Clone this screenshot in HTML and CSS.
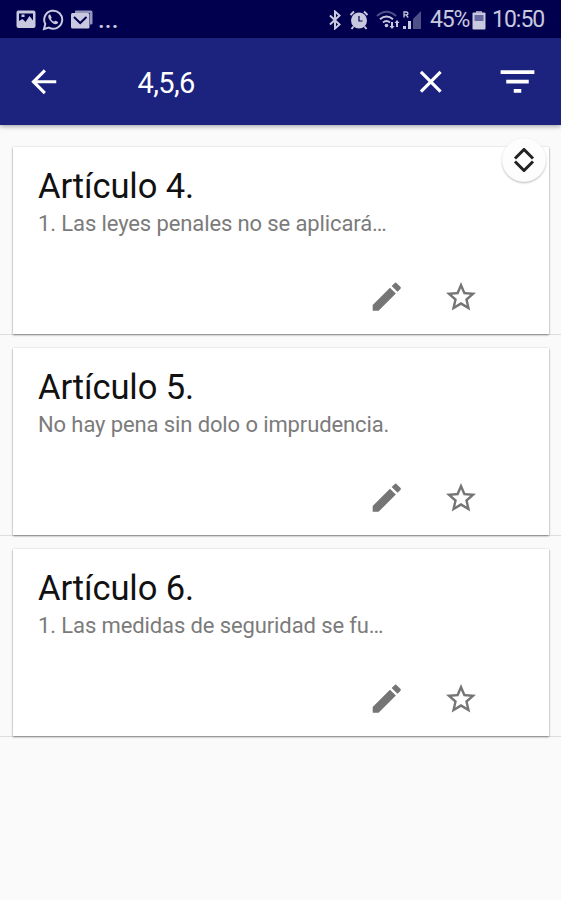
FILE: index.html
```html
<!DOCTYPE html>
<html lang="es">
<head>
<meta charset="utf-8">
<title>Artículos</title>
<link rel="stylesheet" href="styles.css">
</head>
<body>
<svg class="defs" width="0" height="0" aria-hidden="true">
  <symbol id="pencil" viewBox="0 0 24 24"><path d="M3 17.25V21h3.75L17.81 9.94l-3.75-3.75L3 17.25zM20.71 7.04a1 1 0 0 0 0-1.41l-2.34-2.34a1 1 0 0 0-1.41 0l-1.83 1.83 3.75 3.75 1.83-1.83z"/></symbol>
  <symbol id="star" viewBox="0 0 24 24"><path d="M22 9.24l-7.19-.62L12 2 9.19 8.63 2 9.24l5.46 4.73L5.82 21 12 17.27 18.18 21l-1.63-7.03L22 9.24zM12 15.4l-3.76 2.27 1-4.28-3.32-2.88 4.38-.38L12 6.1l1.71 4.04 4.38.38-3.32 2.88 1 4.28L12 15.4z"/></symbol>
</svg>
<div class="status">
  <div class="notices">
    <svg width="20" height="19" viewBox="0 0 20 19"><path fill-rule="evenodd" d="M2.500 .5h15a2 2 0 0 1 2 2v13.500a2 2 0 0 1-2 2h-15a2 2 0 0 1-2-2V2.500a2 2 0 0 1 2-2zM3 3.500v7.500l3.500-2 3 3 4-6 3.500 4.500v-7zM5.500 4.500h3v2.500h-3z"/></svg>
    <svg width="22" height="22" viewBox="0 0 22 22"><path class="line" d="M2 20l1.300-5a9 9 0 1 1 3.600 3.600z"/><path d="M7.300 5.600c-1.600 1.200-1.500 3.200 1 6.200 2.800 3.300 5.500 4.500 7.200 2.800.8-.8.700-1.500.2-1.800l-2-1c-.6-.2-.9.300-1.500 1-1.500-.4-2.700-1.600-3.300-3 .6-.6.900-1 .6-1.600l-.9-2c-.3-.7-.8-.8-1.300-.6z"/></svg>
    <svg width="23" height="19" viewBox="0 0 23 19"><path class="back" d="M5 3V1.500Q5 .5 6 .5h15q1.500 0 1.500 1.500v11q0 1.500-1.500 1.500h-1V3z"/><rect x="1" y="3" width="18.500" height="15.500" rx="1.500"/><path class="cut" d="M4 7l6.200 6L16.500 7"/></svg>
    <span class="dots">...</span>
  </div>
  <div class="signals">
    <svg class="bt" width="14" height="20" viewBox="0 0 14 20"><path class="line" d="M2 5.500l9.500 9L7 18.500v-17l4.500 4L2 14.500"/></svg>
    <svg class="alarm" width="20" height="20" viewBox="0 0 20 20"><circle cx="10" cy="10.500" r="8"/><path class="line" d="M1.500 5L5 1.500M18.500 5L15 1.500M4.500 16.500l-2 2.500M15.500 16.500l2 2.500"/><path class="cut hands" d="M10 6v5h3.500"/></svg>
    <svg class="wifi" width="24" height="20" viewBox="0 0 24 20"><path class="line dim" d="M1 6q9.500-8.500 19 0"/><path class="line" d="M4 9.300q6.500-5.500 13 0M7 12.500q3.500-3 7 0"/><circle cx="10.500" cy="15.500" r="1.800"/><path d="M15 12h2v4h1.500L16 19l-2.500-3H15zM20 17h2v-4h1.500L21 10l-2.500 3H20z"/></svg>
    <svg class="cell" width="20" height="20" viewBox="0 0 20 20"><path class="line thin" d="M2 7.500V2h2q2 0 2 1.400T4 4.800H2M4 4.800l2.200 2.700"/><path d="M1 16h3v3H1zM6 11h3v8H6z"/><path class="dim" d="M19 1v18h-8V9z"/></svg>
    <span class="percent">45%</span>
    <svg class="battery" width="14" height="20" viewBox="0 0 14 20"><path class="back" d="M4 1h6v2H4z"/><rect x=".5" y="2.500" width="13" height="17" rx="1"/><path class="level" d="M2.500 5h9v6h-9z"/></svg>
    <span class="clock">10:50</span>
  </div>
</div>
<header class="bar">
  <svg class="arrow" viewBox="0 0 24 24"><path d="M20 11H7.830l5.590-5.590L12 4l-8 8 8 8 1.410-1.410L7.830 13H20v-2z"/></svg>
  <span class="query">4,5,6</span>
  <svg class="close" viewBox="0 0 24 24"><path d="M19 6.410L17.590 5 12 10.590 6.410 5 5 6.410 10.590 12 5 17.590 6.410 19 12 13.410 17.590 19 19 17.590 13.410 12z"/></svg>
  <svg class="filter" viewBox="0 0 24 24"><path d="M10 18h4v-2h-4v2zM3 6v2h18V6H3zm3 7h12v-2H6v2z"/></svg>
</header>
<main class="list">
  <div class="row"><article class="card">
    <h2>Artículo 4.</h2><p>1. Las leyes penales no se aplicará…</p>
    <div class="actions"><svg class="pencil"><use href="#pencil"/></svg><svg class="star"><use href="#star"/></svg></div>
  </article></div>
  <div class="row"><article class="card">
    <h2>Artículo 5.</h2><p>No hay pena sin dolo o imprudencia.</p>
    <div class="actions"><svg class="pencil"><use href="#pencil"/></svg><svg class="star"><use href="#star"/></svg></div>
  </article></div>
  <div class="row"><article class="card">
    <h2>Artículo 6.</h2><p>1. Las medidas de seguridad se fu…</p>
    <div class="actions"><svg class="pencil"><use href="#pencil"/></svg><svg class="star"><use href="#star"/></svg></div>
  </article></div>
  <div class="scroller"><svg width="22" height="24" viewBox="0 0 22 24"><path d="M2 10.500l9-9 9 9M2 13.500l9 9 9-9"/></svg></div>
</main>
</body>
</html>
```
FILE: styles.css
```css
* { box-sizing: border-box; }
body {
  margin: 0;
  height: 900px;
  overflow: hidden;
  background: #fafafa;
  font-family: Roboto, sans-serif;
}
svg { display: block; flex: none; }
.defs { position: absolute; }

.status {
  height: 38px;
  padding: 1px 18px 0 16px;
  display: flex;
  justify-content: space-between;
  background: #00004f;
  color: #c8c8de;
  fill: #c8c8de;
  font-size: 23px;
  line-height: 40px;
}
.notices, .signals { display: flex; align-items: center; }
.notices { gap: 6px; }
.dots { margin-left: -1px; font-size: 24px; font-weight: 500; letter-spacing: .2px; line-height: 40px; }
.line { fill: none; stroke: #c8c8de; stroke-width: 2; }
.thin { stroke-width: 1.3; }
.back { fill: #9696bc; }
.dim { opacity: .4; }
.cut { fill: none; stroke: #00004f; stroke-width: 2; }
.hands { stroke-width: 1.2; }
.level { fill: #6868a0; }
.alarm { margin-left: 7px; }
.wifi { margin-left: 7px; }
.cell { margin-left: 2px; }
.percent { width: 37px; margin-left: 8px; letter-spacing: -1.2px; }
.battery { margin-left: 5px; }
.clock { width: 51px; margin-left: 6px; letter-spacing: -1px; white-space: nowrap; }

.bar {
  height: 87px;
  display: flex;
  align-items: center;
  padding: 0 21px 0 25px;
  background: #1b237e;
  color: #fff;
  fill: #fff;
  box-shadow: 0 1px 5px rgba(0, 0, 0, .4);
}
.arrow, .close { width: 37.5px; height: 37.5px; }
.query { flex: 1; margin-left: 75px; padding-top: 2px; font-size: 29px; letter-spacing: -.6px; }
.filter { width: 45px; height: 45px; margin-left: 46px; }

.list { position: relative; padding-top: 8px; }
.row {
  height: 201px;
  margin-top: 1px;
  padding: 13px 12px 0 13px;
  border-bottom: 1px solid #dedede;
}
.row + .row { margin-top: 0; }
.card {
  height: 187px;
  padding: 18px 25px 0;
  background: #fff;
  box-shadow: 0 1px 2px rgba(0, 0, 0, .42), 0 0 2px rgba(0, 0, 0, .1);
}
h2, p { margin: 0; font-weight: 400; white-space: nowrap; }
h2 { font-size: 34.5px; line-height: 42px; letter-spacing: -.1px; color: #111; }
p { padding-top: 2px; font-size: 22px; line-height: 30px; letter-spacing: -.11px; color: #7b7b7b; }
.actions {
  display: flex;
  align-items: center;
  height: 38px;
  margin-top: 39px;
  padding-left: 330px;
  fill: #757575;
}
.pencil { width: 37.5px; height: 37.5px; }
.star { width: 36px; height: 36px; margin-left: 37.5px; }
.scroller {
  position: absolute;
  top: 13px;
  right: 15px;
  width: 44px;
  height: 44px;
  display: grid;
  place-items: center;
  border-radius: 50%;
  background: #fdfdfd;
  box-shadow: 0 1px 2px rgba(0, 0, 0, .28);
}
.scroller path { fill: none; stroke: #222; stroke-width: 3; }
```
